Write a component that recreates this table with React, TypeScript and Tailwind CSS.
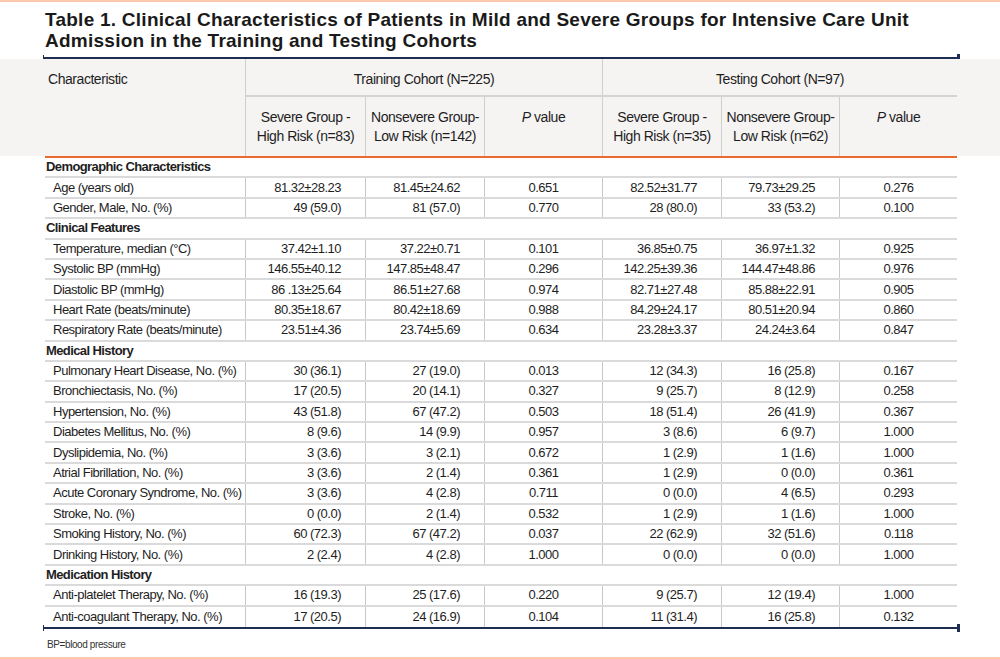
type Row =
  | { kind: "section"; label: string }
  | { kind: "data"; label: string; values: [string, string, string, string, string, string] };

const rows: Row[] = [
  { kind: "section", label: "Demographic Characteristics" },
  { kind: "data", label: "Age (years old)", values: ["81.32±28.23", "81.45±24.62", "0.651", "82.52±31.77", "79.73±29.25", "0.276"] },
  { kind: "data", label: "Gender, Male, No. (%)", values: ["49 (59.0)", "81 (57.0)", "0.770", "28 (80.0)", "33 (53.2)", "0.100"] },
  { kind: "section", label: "Clinical Features" },
  { kind: "data", label: "Temperature, median (°C)", values: ["37.42±1.10", "37.22±0.71", "0.101", "36.85±0.75", "36.97±1.32", "0.925"] },
  { kind: "data", label: "Systolic BP (mmHg)", values: ["146.55±40.12", "147.85±48.47", "0.296", "142.25±39.36", "144.47±48.86", "0.976"] },
  { kind: "data", label: "Diastolic BP (mmHg)", values: ["86 .13±25.64", "86.51±27.68", "0.974", "82.71±27.48", "85.88±22.91", "0.905"] },
  { kind: "data", label: "Heart Rate (beats/minute)", values: ["80.35±18.67", "80.42±18.69", "0.988", "84.29±24.17", "80.51±20.94", "0.860"] },
  { kind: "data", label: "Respiratory Rate (beats/minute)", values: ["23.51±4.36", "23.74±5.69", "0.634", "23.28±3.37", "24.24±3.64", "0.847"] },
  { kind: "section", label: "Medical History" },
  { kind: "data", label: "Pulmonary Heart Disease, No. (%)", values: ["30 (36.1)", "27 (19.0)", "0.013", "12 (34.3)", "16 (25.8)", "0.167"] },
  { kind: "data", label: "Bronchiectasis, No. (%)", values: ["17 (20.5)", "20 (14.1)", "0.327", "9 (25.7)", "8 (12.9)", "0.258"] },
  { kind: "data", label: "Hypertension, No. (%)", values: ["43 (51.8)", "67 (47.2)", "0.503", "18 (51.4)", "26 (41.9)", "0.367"] },
  { kind: "data", label: "Diabetes Mellitus, No. (%)", values: ["8 (9.6)", "14 (9.9)", "0.957", "3 (8.6)", "6 (9.7)", "1.000"] },
  { kind: "data", label: "Dyslipidemia, No. (%)", values: ["3 (3.6)", "3 (2.1)", "0.672", "1 (2.9)", "1 (1.6)", "1.000"] },
  { kind: "data", label: "Atrial Fibrillation, No. (%)", values: ["3 (3.6)", "2 (1.4)", "0.361", "1 (2.9)", "0 (0.0)", "0.361"] },
  { kind: "data", label: "Acute Coronary Syndrome, No. (%)", values: ["3 (3.6)", "4 (2.8)", "0.711", "0 (0.0)", "4 (6.5)", "0.293"] },
  { kind: "data", label: "Stroke, No. (%)", values: ["0 (0.0)", "2 (1.4)", "0.532", "1 (2.9)", "1 (1.6)", "1.000"] },
  { kind: "data", label: "Smoking History, No. (%)", values: ["60 (72.3)", "67 (47.2)", "0.037", "22 (62.9)", "32 (51.6)", "0.118"] },
  { kind: "data", label: "Drinking History, No. (%)", values: ["2 (2.4)", "4 (2.8)", "1.000", "0 (0.0)", "0 (0.0)", "1.000"] },
  { kind: "section", label: "Medication History" },
  { kind: "data", label: "Anti-platelet Therapy, No. (%)", values: ["16 (19.3)", "25 (17.6)", "0.220", "9 (25.7)", "12 (19.4)", "1.000"] },
  { kind: "data", label: "Anti-coagulant Therapy, No. (%)", values: ["17 (20.5)", "24 (16.9)", "0.104", "11 (31.4)", "16 (25.8)", "0.132"] },
];

const cols = "grid grid-cols-[200px_120px_119px_118px_119px_118px_118px]";

function NavyRule() {
  return (
    <div className="ml-[43px] flex h-[8px] w-[917px] items-center">
      <div className="h-[6px] w-[1px] bg-[#1e2d52]" />
      <div className="h-[2px] flex-1 bg-[#1e2d52]" />
      <div className="h-[8px] w-[3px] bg-[#1e2d52]" />
    </div>
  );
}

function PValue() {
  return (
    <span>
      <i>P</i> value
    </span>
  );
}

export default function App() {
  return (
    <div className="flex h-[659px] w-[1000px] flex-col overflow-hidden bg-white font-['Liberation_Sans',Arial,sans-serif] text-[#1e1e1e]">
      <div className="h-[2px] bg-[#fcc9ad]" />

      <h1 className="pl-[45px] pt-[7px] text-[19px] font-bold leading-[21px] tracking-[0.25px] text-[#1a1a1a]">
        Table 1. Clinical Characteristics of Patients in Mild and Severe Groups for Intensive Care Unit
        <br />
        Admission in the Training and Testing Cohorts
      </h1>

      <div className="mt-[3px]">
        <NavyRule />
      </div>

      {/* header */}
      <div className="-mt-[3px] bg-[#f6f4f3]">
        <div className={`${cols} ml-[45px] w-[912px] text-[14px] leading-[19px] tracking-[-0.45px]`}>
          <div className="row-span-2 pl-[3px] pt-[11px]">Characteristic</div>
          <div className="col-span-3 h-[38px] border-b-2 border-l border-b-[#d4d4d4] border-l-[#cfcfcf] pt-[11px] text-center">
            Training Cohort (N=225)
          </div>
          <div className="col-span-3 h-[38px] border-b-2 border-l border-b-[#d4d4d4] border-l-[#cfcfcf] pt-[11px] text-center">
            Testing Cohort (N=97)
          </div>
          <div className="h-[59px] border-l border-[#cfcfcf] pt-[11px] text-center">
            Severe Group -<br />High Risk (n=83)
          </div>
          <div className="h-[59px] border-l border-[#cfcfcf] pt-[11px] text-center">
            Nonsevere Group-<br />Low Risk (n=142)
          </div>
          <div className="h-[59px] border-l border-[#cfcfcf] pt-[11px] text-center">
            <PValue />
          </div>
          <div className="h-[59px] border-l border-[#cfcfcf] pt-[11px] text-center">
            Severe Group -<br />High Risk (n=35)
          </div>
          <div className="h-[59px] border-l border-[#cfcfcf] pt-[11px] text-center">
            Nonsevere Group-<br />Low Risk (n=62)
          </div>
          <div className="h-[59px] border-l border-[#cfcfcf] pt-[11px] text-center">
            <PValue />
          </div>
        </div>
      </div>

      {/* body */}
      <div className="ml-[45px] w-[912px] border-t-2 border-[#e96b32] text-[13px] leading-[16px] tracking-[-0.5px]">
        {rows.map((row, i) => {
          const last = i === rows.length - 1;
          const line = last ? "" : "border-b-2 border-[#dadada]";
          if (row.kind === "section") {
            return (
              <div
                key={row.label}
                className={`flex h-[20.4px] items-center pl-[1px] font-bold tracking-[-0.6px] ${line}`}
              >
                {row.label}
              </div>
            );
          }
          return (
            <div key={row.label} className={`${cols} h-[20.4px] ${line}`}>
              <div className="flex items-center whitespace-nowrap pl-[8px]">{row.label}</div>
              {row.values.map((v, j) => (
                <div
                  key={j}
                  className={
                    j === 2 || j === 5
                      ? "flex items-center justify-center border-l border-[#c8c8c8]"
                      : "flex items-center justify-end border-l border-[#c8c8c8] pr-[24px]"
                  }
                >
                  {v}
                </div>
              ))}
            </div>
          );
        })}
      </div>

      <div className="-mt-[3px]">
        <NavyRule />
      </div>

      <p className="pl-[47px] pt-[6px] text-[10px] leading-[14px] tracking-[-0.4px] text-[#333]">BP=blood pressure</p>

      <div className="mt-auto h-[2px] bg-[#fcc9ad]" />
    </div>
  );
}
